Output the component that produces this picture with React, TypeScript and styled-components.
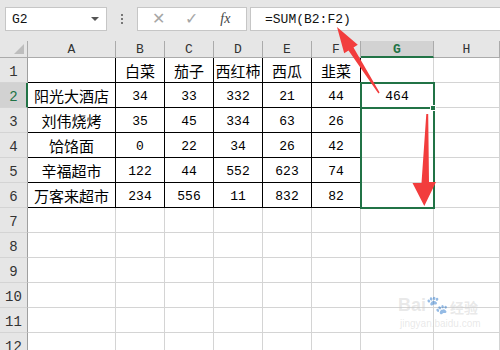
import React from "react";
import styled, { createGlobalStyle, css } from "styled-components";

const GlobalStyle = createGlobalStyle`
  html, body { margin: 0; padding: 0; background: #ffffff; overflow: hidden; }
  * { box-sizing: border-box; }
`;

const GREEN = "#217346";
const GRID = "#d4d4d4";
const MONO = `"Liberation Mono", "Noto Sans CJK SC", monospace`;
const CJK = `"Noto Sans CJK SC", "Liberation Sans", sans-serif`;

const Page = styled.div`
  position: relative;
  width: 500px;
  height: 350px;
  overflow: hidden;
  background: #fff;
`;

const Toolbar = styled.div`
  height: 41px;
  background: #e6e6e6;
  display: flex;
  align-items: flex-start;
  padding: 7px 0 0 5px;
`;

const NameBox = styled.div`
  width: 102px;
  height: 24px;
  background: #fff;
  border: 1px solid #c6c6c6;
  display: flex;
  align-items: center;
  justify-content: space-between;
  padding: 0 6px 0 6px;
  font-family: ${MONO};
  font-size: 13px;
  color: #111;
`;

const DropArrow = styled.span`
  width: 0;
  height: 0;
  border-left: 4px solid transparent;
  border-right: 4px solid transparent;
  border-top: 4px solid #555;
  margin-right: 1px;
`;

const Dots = styled.div`
  width: 30px;
  height: 24px;
  display: flex;
  flex-direction: column;
  align-items: center;
  justify-content: center;
  gap: 2px;
  span {
    width: 2px;
    height: 2px;
    background: #777;
  }
`;

const FxButtons = styled.div`
  width: 110px;
  height: 24px;
  background: #fff;
  border: 1px solid #c6c6c6;
  display: flex;
  align-items: center;
  justify-content: space-around;
  padding: 0 4px 0 4px;
`;

const FxBtn = styled.span<{ $italic?: boolean }>`
  width: 30px;
  text-align: center;
  color: #a6a6a6;
  font-family: "Liberation Sans", sans-serif;
  font-size: 16px;
  line-height: 1;
  ${(p) =>
    p.$italic &&
    css`
      color: #444;
      font-family: "Liberation Serif", serif;
      font-style: italic;
      font-size: 14px;
    `}
`;

const FormulaInput = styled.div`
  flex: 1;
  height: 24px;
  margin-left: 3px;
  background: #fff;
  border: 1px solid #c6c6c6;
  border-right: none;
  display: flex;
  align-items: center;
  padding-left: 14px;
  font-family: ${MONO};
  font-size: 13px;
  color: #111;
`;

const Sheet = styled.div`
  display: grid;
  grid-template-columns: 28px 88px 49px 49px 49px 49px 49px 73px 66px;
  grid-template-rows: 17px repeat(12, 25px);
`;

const Corner = styled.div`
  background: #e6e6e6;
  border-right: 1px solid #ababab;
  border-bottom: 1px solid #ababab;
  display: flex;
  align-items: flex-end;
  justify-content: flex-end;
  padding: 0 3px 3px 0;
  &::after {
    content: "";
    width: 0;
    height: 0;
    border-left: 10px solid transparent;
    border-bottom: 10px solid #bdbdbd;
  }
`;

const ColHead = styled.div<{ $sel?: boolean }>`
  background: #e6e6e6;
  border-right: 1px solid #ababab;
  border-bottom: 1px solid #ababab;
  display: flex;
  align-items: center;
  justify-content: center;
  font-family: ${MONO};
  font-size: 13px;
  color: #333;
  padding-top: 1px;
  ${(p) =>
    p.$sel &&
    css`
      background: #d2d2d2;
      color: ${GREEN};
      font-weight: bold;
      border-bottom: 2px solid ${GREEN};
    `}
`;

const RowHead = styled.div<{ $sel?: boolean }>`
  background: #e6e6e6;
  border-right: 1px solid #9f9f9f;
  border-bottom: 1px solid ${GRID};
  display: flex;
  align-items: center;
  justify-content: center;
  padding-top: 4px;
  font-family: ${MONO};
  font-size: 14px;
  color: #333;
  ${(p) =>
    p.$sel &&
    css`
      background: #d2d2d2;
      color: ${GREEN};
      border-right: 2px solid ${GREEN};
      padding-left: 1px;
    `}
`;

const Cell = styled.div<{ $boxed?: boolean; $num?: boolean }>`
  border-right: 1px solid ${(p) => (p.$boxed ? "#000" : GRID)};
  border-bottom: 1px solid ${(p) => (p.$boxed ? "#000" : GRID)};
  display: flex;
  align-items: center;
  justify-content: center;
  white-space: nowrap;
  overflow: hidden;
  color: #000;
  font-family: ${(p) => (p.$num ? MONO : CJK)};
  font-size: ${(p) => (p.$num ? "13px" : "15px")};
  padding-top: ${(p) => (p.$num ? "2px" : "0")};
`;

const Selection = styled.div`
  position: absolute;
  left: 360px;
  top: 82px;
  width: 75px;
  height: 127px;
  border: 2px solid ${GREEN};
  pointer-events: none;
`;

const ActiveLine = styled.div`
  position: absolute;
  left: 360px;
  top: 107px;
  width: 72px;
  height: 2px;
  background: ${GREEN};
`;

const FillHandle = styled.div`
  position: absolute;
  left: 430px;
  top: 105px;
  width: 6px;
  height: 6px;
  background: ${GREEN};
  border: 1px solid #fff;
`;

const Overlay = styled.svg`
  position: absolute;
  left: 0;
  top: 0;
  pointer-events: none;
`;

const Watermark = styled.div`
  position: absolute;
  left: 398px;
  top: 296px;
  display: flex;
  flex-direction: column;
  align-items: flex-start;
  color: rgba(205, 205, 205, 0.45);
  pointer-events: none;
`;

const WmTop = styled.div`
  display: flex;
  align-items: flex-end;
  font-family: "Liberation Sans", sans-serif;
  font-weight: bold;
  font-size: 18px;
  line-height: 1;
  span + span {
    font-family: ${CJK};
    font-size: 14px;
    margin-left: 2px;
  }
`;

const WmBottom = styled.div`
  font-family: "Liberation Sans", sans-serif;
  font-size: 10px;
  margin-top: 4px;
  margin-left: 2px;
`;

const cols = ["A", "B", "C", "D", "E", "F", "G", "H"];
const data: string[][] = [
  ["", "白菜", "茄子", "西红柿", "西瓜", "韭菜", "", ""],
  ["阳光大酒店", "34", "33", "332", "21", "44", "464", ""],
  ["刘伟烧烤", "35", "45", "334", "63", "26", "", ""],
  ["饸饹面", "0", "22", "34", "26", "42", "", ""],
  ["辛福超市", "122", "44", "552", "623", "74", "", ""],
  ["万客来超市", "234", "556", "11", "832", "82", "", ""],
];

const isNum = (s: string) => /^[0-9]+$/.test(s);

export default function App() {
  const rows = Array.from({ length: 12 }, (_, r) => r);
  return (
    <Page>
      <GlobalStyle />
      <Toolbar>
        <NameBox>
          <span>G2</span>
          <DropArrow />
        </NameBox>
        <Dots>
          <span />
          <span />
          <span />
        </Dots>
        <FxButtons>
          <FxBtn>✕</FxBtn>
          <FxBtn>✓</FxBtn>
          <FxBtn $italic>fx</FxBtn>
        </FxButtons>
        <FormulaInput>=SUM(B2:F2)</FormulaInput>
      </Toolbar>
      <Sheet>
        <Corner />
        {cols.map((c) => (
          <ColHead key={c} $sel={c === "G"}>
            {c}
          </ColHead>
        ))}
        {rows.map((r) => (
          <React.Fragment key={r}>
            <RowHead $sel={r === 1}>{r + 1}</RowHead>
            {cols.map((c, ci) => {
              const v = data[r]?.[ci] ?? "";
              const boxed = r < 6 && ci < 6;
              return (
                <Cell key={c} $boxed={boxed} $num={isNum(v)}>
                  {v}
                </Cell>
              );
            })}
          </React.Fragment>
        ))}
      </Sheet>
      <Selection />
      <ActiveLine />
      <FillHandle />
      <Watermark>
        <WmTop>
          <span>Bai🐾</span>
          <span>经验</span>
        </WmTop>
        <WmBottom>jingyan.baidu.com</WmBottom>
      </Watermark>
      <Overlay width="500" height="350" viewBox="0 0 500 350">
        <polygon
          fill="#f23d3d"
          points="337,27 357.8,44.7 353.5,47.4 379.6,92.6 378.4,93.4 348.5,50.6 344.2,53.3"
        />
        <polygon
          fill="#f23d3d"
          points="426.3,114 428.2,114 429,182 436,182 424.3,206 412.5,183 421.5,183"
        />
      </Overlay>
    </Page>
  );
}
